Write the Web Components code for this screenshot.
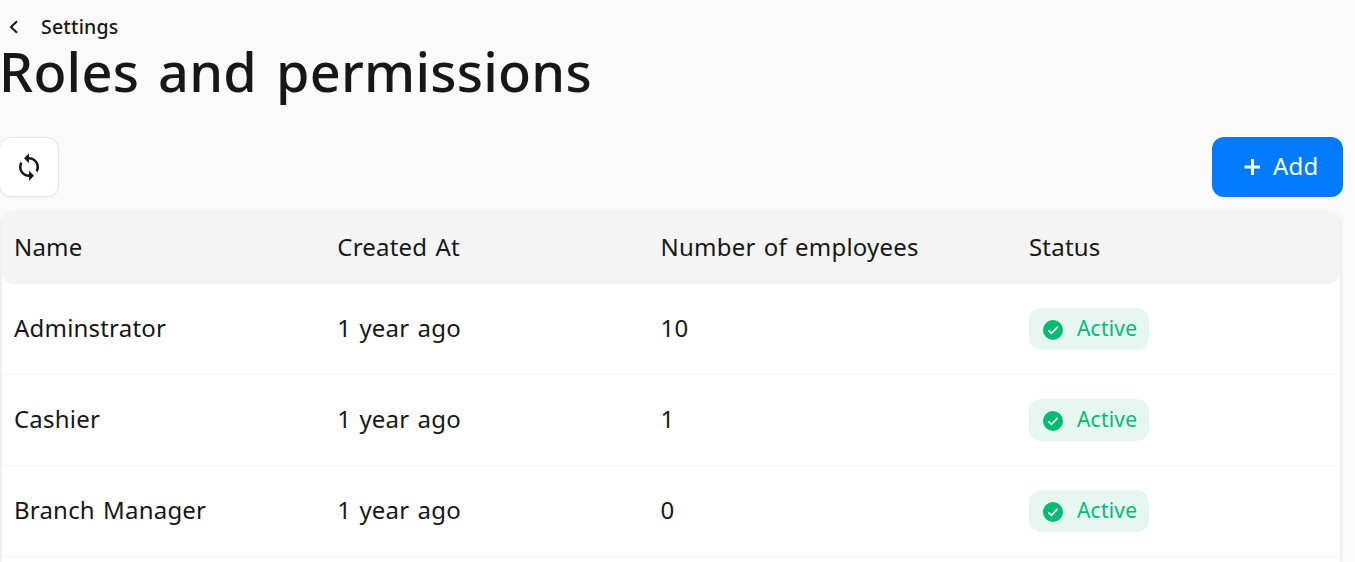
<!DOCTYPE html>
<html lang="en">
<head>
<meta charset="utf-8">
<title>Roles and permissions</title>
<style>
  html, body {
    margin: 0;
    height: 100%;
    overflow: hidden;
  }
  body {
    background: #fafafa;
    color: #171717;
    font-family: "Noto Sans", "Open Sans", sans-serif;
    font-size: 24px;
    letter-spacing: 0.2px;
  }
</style>
</head>
<body>
<roles-page></roles-page>

<script>
class PageHeading extends HTMLElement {
  connectedCallback() {
    this.attachShadow({ mode: "open" });
    this.shadowRoot.innerHTML = `
      <style>
        :host {
          display: block;
          height: 137px;
        }

        .back {
          display: flex;
          align-items: center;
          gap: 20px;
          padding: 13px 0 0 7px;
          font-size: 19.5px;
          font-weight: 500;
          line-height: 28px;
        }

        svg {
          width: 14px;
          height: 14px;
        }

        h1 {
          margin: 0 0 0 -1px;
          font-size: 54px;
          font-weight: 500;
          line-height: 60px;
          letter-spacing: 0.25px;
          word-spacing: 4.6px;
          white-space: nowrap;
        }
      </style>

      <div class="back">
        <svg viewBox="0 0 14 14" fill="none" stroke="#171717" stroke-width="2"><path d="M10 1.3 4 7l6 5.7"/></svg>
        <slot name="parent"></slot>
      </div>
      <h1><slot></slot></h1>
    `;
  }
}

class IconButton extends HTMLElement {
  connectedCallback() {
    this.attachShadow({ mode: "open" });
    this.shadowRoot.innerHTML = `
      <style>
        :host {
          display: block;
        }

        button {
          display: flex;
          align-items: center;
          justify-content: center;
          box-sizing: border-box;
          width: 60px;
          height: 60px;
          margin-left: -1px;
          padding: 0 0 1px;
          background: #fff;
          color: #171717;
          border: 1px solid #e5e5e5;
          border-radius: 12px;
          box-shadow: 0 1px 2px rgba(0, 0, 0, 0.05);
        }

        svg {
          width: 30px;
          height: 30px;
        }
      </style>

      <button aria-label="Refresh">
        <svg viewBox="0 0 24 24" fill="currentColor"><path d="M12 4V1L8 5l4 4V6c3.31 0 6 2.69 6 6 0 1.010-.25 1.970-.7 2.800l1.460 1.460C19.540 15.030 20 13.570 20 12c0-4.420-3.580-8-8-8zm0 14c-3.310 0-6-2.690-6-6 0-1.010.25-1.970.7-2.800L5.240 7.740C4.460 8.970 4 10.430 4 12c0 4.420 3.580 8 8 8v3l4-4-4-4v3z"/></svg>
      </button>
    `;
  }
}

class AddButton extends HTMLElement {
  connectedCallback() {
    this.attachShadow({ mode: "open" });
    this.shadowRoot.innerHTML = `
      <style>
        :host {
          display: block;
        }

        button {
          display: flex;
          align-items: center;
          gap: 13px;
          box-sizing: border-box;
          width: 131px;
          height: 60px;
          padding: 0 0 3px 32px;
          background: #007bff;
          color: #fff;
          border: 0;
          border-radius: 12px;
          font: inherit;
          letter-spacing: 0.2px;
        }

        svg {
          width: 16px;
          height: 16px;
          margin-top: 2px;
        }
      </style>

      <button>
        <svg viewBox="0 0 16 16" fill="none" stroke="#fff" stroke-width="3"><path d="M8.500 0v16M0.500 8h16"/></svg>
        <span><slot></slot></span>
      </button>
    `;
  }
}

class StatusBadge extends HTMLElement {
  connectedCallback() {
    this.attachShadow({ mode: "open" });
    this.shadowRoot.innerHTML = `
      <style>
        :host {
          display: flex;
          align-items: center;
          gap: 14px;
          box-sizing: border-box;
          width: 120px;
          height: 42px;
          padding-left: 14px;
          background: #e6f7f1;
          color: #05bb71;
          border-radius: 12px;
          font-size: 21px;
          white-space: nowrap;
        }

        svg {
          flex: none;
          width: 20px;
          height: 20px;
          margin-top: 2px;
        }

        span {
          margin-top: -2px;
        }
      </style>

      <svg viewBox="0 0 20 20"><circle cx="10" cy="10" r="10" fill="#05bb71"/><path d="M5.400 10.400 8.500 13.400 14.600 6.900" fill="none" stroke="#fff" stroke-width="1.600"/></svg>
      <span><slot></slot></span>
    `;
  }
}

class RoleRow extends HTMLElement {
  connectedCallback() {
    this.attachShadow({ mode: "open" });
    this.shadowRoot.innerHTML = `
      <style>
        :host {
          display: grid;
          grid-template-columns: 323.300px 323.300px 368.400px 1fr;
          align-items: center;
          box-sizing: border-box;
          height: 91px;
          padding-left: 12px;
          border-bottom: 1px solid #f4f4f4;
          word-spacing: 1.750px;
        }

        :host([header]) {
          height: 73px;
          background: #f4f4f4;
          border: 0;
          border-radius: 12px;
        }

        ::slotted(span) {
          padding-bottom: 3px;
        }

        :host([header]) ::slotted(span) {
          padding-bottom: 2px;
        }
      </style>

      <slot></slot>
    `;
  }
}

class RolesTable extends HTMLElement {
  connectedCallback() {
    this.attachShadow({ mode: "open" });
    this.shadowRoot.innerHTML = `
      <style>
        :host {
          display: block;
          margin: 14px 15px 0 2px;
          padding-bottom: 5px;
          background: #fff;
          border-radius: 12px 12px 0 0;
          box-shadow: 0 2px 4px rgba(0, 0, 0, 0.13);
        }
      </style>

      <slot></slot>
    `;
  }
}

class RolesPage extends HTMLElement {
  connectedCallback() {
    this.attachShadow({ mode: "open" });
    this.shadowRoot.innerHTML = `
      <style>
        :host {
          display: block;
        }

        .toolbar {
          display: flex;
          justify-content: space-between;
          padding-right: 12px;
        }
      </style>

      <page-heading><span slot="parent">Settings</span>Roles and permissions</page-heading>
      <div class="toolbar">
        <icon-button></icon-button>
        <add-button>Add</add-button>
      </div>
      <roles-table>
        <role-row header>
          <span>Name</span><span>Created At</span><span>Number of employees</span><span>Status</span>
        </role-row>
        <role-row>
          <span>Adminstrator</span><span>1 year ago</span><span>10</span><status-badge>Active</status-badge>
        </role-row>
        <role-row>
          <span>Cashier</span><span>1 year ago</span><span>1</span><status-badge>Active</status-badge>
        </role-row>
        <role-row>
          <span>Branch Manager</span><span>1 year ago</span><span>0</span><status-badge>Active</status-badge>
        </role-row>
      </roles-table>
    `;
  }
}

customElements.define("page-heading", PageHeading);
customElements.define("icon-button", IconButton);
customElements.define("add-button", AddButton);
customElements.define("status-badge", StatusBadge);
customElements.define("role-row", RoleRow);
customElements.define("roles-table", RolesTable);
customElements.define("roles-page", RolesPage);
</script>
</body>
</html>
